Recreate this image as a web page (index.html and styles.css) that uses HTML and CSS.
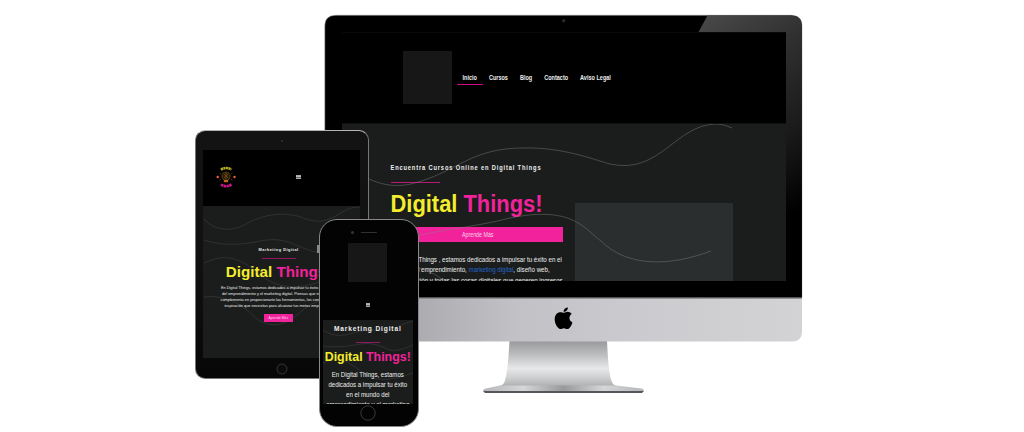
FILE: index.html
```html
<!DOCTYPE html>
<html lang="es">
<head>
<meta charset="utf-8">
<title>Digital Things</title>
<link rel="stylesheet" href="styles.css">
</head>
<body>
<main class="stage">
  <section class="monitor">
    <svg class="shell" viewBox="0 0 480 382" width="480" height="382">
      <defs>
        <linearGradient id="chin"><stop offset="0" stop-color="#a6a6aa"/><stop offset=".2" stop-color="#adadb1"/><stop offset=".4" stop-color="#c2c2c6"/><stop offset=".65" stop-color="#cbcbcf"/><stop offset="1" stop-color="#d3d3d5"/></linearGradient>
        <linearGradient id="neck" x1="0" y1="0" x2="0" y2="1"><stop offset="0" stop-color="#98999b"/><stop offset=".3" stop-color="#bcbdbf"/><stop offset=".6" stop-color="#e7e8ea"/><stop offset=".8" stop-color="#cfd0d2"/><stop offset="1" stop-color="#adaeb0"/></linearGradient>
        <linearGradient id="foot"><stop offset="0" stop-color="#b5b6b8"/><stop offset=".25" stop-color="#d5d6d8"/><stop offset=".5" stop-color="#98999b"/><stop offset=".75" stop-color="#d5d6d8"/><stop offset="1" stop-color="#b5b6b8"/></linearGradient>
        <linearGradient id="glare" x1="0" y1="0" x2=".25" y2="1"><stop offset="0" stop-color="#4a4a4a"/><stop offset=".3" stop-color="#2f2f2f"/><stop offset=".6" stop-color="#1a1a1a"/><stop offset=".88" stop-color="#000"/></linearGradient>
      </defs>
      <path fill="url(#neck)" d="M184.500 326H282C283 345 284 360 287 367Q288 371 295 371.500H171Q178 371 179.500 367C182.500 359 183.500 342 184.500 326Z"/>
      <path fill="url(#foot)" d="M175 370.500H292L316 373.500Q319 374 319 376H158Q158 374 161 373.500Z"/>
      <path fill="#55565c" d="M158 376H319L317 378H160Z"/>
      <path fill="url(#chin)" d="M0 282H477V317Q477 326.500 467 326.500H10Q0 326 0 317Z"/>
      <path fill="#000" stroke="#a5a5a5" stroke-width=".5" d="M-.2 283V11Q-.2 .2 11 .2H466Q477 .2 477 11V283Z"/>
      <path fill="url(#glare)" d="M382.500 .5H466Q476.700 .5 476.700 11V282H430L460.500 220V17H373.500Z"/>
      <path fill="#808083" d="M0 282.500H477V283.700H0Z"/>
      <circle cx="238.700" cy="5.700" r="1.700" fill="#292831"/>
      <g transform="translate(229.400 292.500)">
        <path d="M9.300 5.200C11 5.200 11.600 4.300 13.400 4.300C15 4.300 16.400 5.200 17.300 6.600C14 8.600 14.400 13.400 18 14.900C17.200 17.500 15.300 21.500 12.800 21.500C11.600 21.500 11 20.700 9.500 20.700C7.900 20.700 7.300 21.500 6 21.500C3.200 21.500 .3 16.400 .3 11.800C.3 7.300 3.100 4.700 5.900 4.700C7.600 4.700 8.400 5.200 9.300 5.200Z"/>
        <path d="M9.200 4.400C9 2.100 11.100 .1 13.400 0C13.600 2.400 11.500 4.400 9.200 4.400Z"/>
      </g>
    </svg>
    <div class="desk-screen">
      <header class="desk-header">
        <div class="desk-logo"></div>
        <nav class="desk-nav"><a class="active"><span>Inicio</span></a><a><span>Cursos</span></a><a><span>Blog</span></a><a><span>Contacto</span></a><a><span>Aviso Legal</span></a></nav>
      </header>
      <div class="desk-hero">
        <div class="desk-copy">
          <p class="desk-kicker">Encuentra Cursos Online en Digital Things</p>
          <div class="desk-rule"></div>
          <h1 class="desk-title"><span>Digital</span> Things!</h1>
          <div class="desk-button"><span>Aprende Más</span></div>
          <p class="desk-text"><span>En Digital Things , estamos dedicados a impulsar tu éxito en el</span><span>mundo del emprendimiento, <a>marketing digital</a>, diseño web,</span><span>programación y todas las cosas digitales que generen ingresos</span></p>
        </div>
        <div class="desk-media"></div>
        <svg class="waves" viewBox="342 123 444 158" width="444" height="158">
          <path d="M342 160C370 184 394 189 418 181C457 170 472 147 523 147C562 146 592 158 610 163C661 174 675 123 717 123Q724 123 732 127"/>
          <path d="M400 238C445 228 475 226 510 217C574 204 585 229 601 240C628 267 671 265 711 250"/>
          <path d="M400 262Q430 268 443 279"/>
        </svg>
      </div>
    </div>
  </section>

  <section class="tablet">
    <div class="tablet-camera"></div>
    <div class="tablet-screen">
      <header class="tablet-header">
        <svg class="badge" viewBox="0 0 20 22" width="20" height="22">
          <path d="M5 3.700Q10 .2 15.500 3.700" fill="none" stroke="#b8ad20" stroke-width="2.600" stroke-dasharray="2.200 .45"/>
          <path d="M5 18.500Q10 22 15.500 18.500" fill="none" stroke="#c51686" stroke-width="2.700" stroke-dasharray="2.500 .4"/>
          <path d="M8 15.500V14C4 11 6 6 10 6S16 11 12 14V15.500Z" fill="#2d1f0c" stroke="#89601e" stroke-width=".8" stroke-dasharray="1 .6"/>
          <path d="M8 8L12 12M12 8L8 12M10 6V15M5 8L3.500 7M15 8L16.500 7M5 13L3.500 14.500M15 13L16.500 14.500" stroke="#84551a" stroke-width=".6"/>
          <rect x="8" y="14" width="4" height="2.200" fill="#bd6919"/>
          <circle cx="1.700" cy="11" r="1.200" fill="#f4622b"/><circle cx="18.500" cy="11" r="1.200" fill="#f4622b"/>
        </svg>
        <div class="menu"></div>
      </header>
      <div class="tablet-hero">
        <svg class="waves dim" viewBox="203 206 157 152" width="157" height="152">
          <path d="M204 219C216 232 232 231 244 225C265 213 287 211 306 219C333 228 340 206 360 207"/>
          <path d="M204 240C228 248 250 243 266 240C296 237 300 255 334 253"/>
          <path d="M204 263C225 253 239 258 254 270C272 286 292 294 330 278"/>
          <path d="M204 297C231 294 246 309 257 319C277 332 292 320 304 309Q316 298 335 301"/>
        </svg>
        <p class="tablet-kicker">Marketing Digital</p>
        <div class="tablet-rule"></div>
        <h2 class="tablet-title"><span>Digital</span> Things!</h2>
        <p class="tablet-text"><span>En Digital Things, estamos dedicados a impulsar tu éxito en el mundo</span><span>del emprendimiento y el marketing digital. Piensas que nuestra labor</span><span>complementa en proporcionarte las herramientas, los conocimientos y</span><span>inspiración que necesitas para alcanzar tus metas empresariales.</span></p>
        <div class="tablet-button"><span>Aprende Más</span></div>
      </div>
    </div>
    <svg class="tablet-home" viewBox="0 0 12 12" width="12" height="12"><circle cx="6" cy="6" r="5"/></svg>
  </section>

  <section class="phone">
    <div class="phone-side"></div>
    <div class="phone-top"><i class="lens"></i><i class="speaker"></i></div>
    <div class="phone-logo"></div>
    <div class="menu phone-menu"></div>
    <div class="phone-screen">
      <svg class="waves dim" viewBox="323 320 90 84" width="90" height="84">
        <path d="M323 330C343 343 355 328 374 330C391 333 397 325 413 321"/>
        <path d="M323 346C353 350 362 338 383 347Q393 355 413 345"/>
        <path d="M323 363C343 354 353 366 366 375Q382 385 413 373"/>
      </svg>
      <p class="phone-kicker">Marketing Digital</p>
      <div class="phone-rule"></div>
      <h2 class="phone-title"><span>Digital</span> Things!</h2>
      <p class="phone-text"><span>En Digital Things, estamos</span><span>dedicados a impulsar tu éxito</span><span>en el mundo del</span><span>emprendimiento y el marketing</span></p>
    </div>
    <svg class="phone-home" viewBox="0 0 16 16" width="16" height="16"><circle cx="8" cy="8" r="7.200"/></svg>
  </section>
</main>
</body>
</html>
```
FILE: styles.css
```css
* { box-sizing: border-box; }
body { margin: 0; background: #fff; font-family: "Liberation Sans", Arial, sans-serif; color: #eee; }
p, h1, h2 { margin: 0; white-space: nowrap; }
.stage { position: relative; width: 1024px; height: 432px; overflow: hidden; }
.shell { display: block; overflow: visible; }
.waves { position: absolute; left: 0; top: 0; fill: none; stroke: #818585; stroke-opacity: .48; stroke-width: .9; }
.dim { stroke-opacity: .28; stroke-width: .7; }

.monitor { position: absolute; left: 325px; top: 15px; }
.desk-screen { position: absolute; left: 17px; top: 17px; width: 443.500px; height: 249px; overflow: hidden; background: #1b1d1c; }
.desk-header { display: flex; height: 92px; padding: 19px 0 0 60.500px; background: #000; border-top: 1px solid #090909; border-bottom: 1px solid #111; }
.desk-logo { width: 49.500px; height: 53px; margin-top: -1px; background: #171717; }
.desk-nav { display: flex; align-items: flex-start; padding: 21px 0 0 4.500px; font-size: 5.520px; line-height: 8px; font-weight: bold; }
.desk-nav a { padding: 0 6px 3px; border-bottom: 1.500px solid transparent; }
.desk-nav span { display: block; transform: translateY(.5px) scaleY(1.15); }
.desk-nav .active { border-color: #d10c86; }
.desk-hero { position: relative; display: flex; height: 157px; padding-left: 48.500px; }
.desk-copy { width: 172.500px; padding-top: 40px; }
.desk-kicker { font-size: 5.700px; line-height: 8px; font-weight: bold; letter-spacing: .86px; transform: scaleY(1.1); }
.desk-rule { width: 49px; height: 1px; margin-top: 10px; background: #b51a79; }
.desk-title { margin-top: 6.500px; font-size: 21.900px; line-height: 28px; color: #f1229b; transform: scaleY(1.08); }
.desk-title span, .tablet-title span, .phone-title span { color: #f3ed2d; }
.desk-button { height: 15px; margin-top: 9.500px; background: #f1229b; font-size: 5.300px; line-height: 15px; text-align: center; color: #fcd3eb; }
.desk-button span { display: block; padding-left: 2px; transform: translateY(.5px) scaleY(1.2); }
.desk-text { margin-top: 12.700px; font-size: 6.160px; line-height: 10.800px; }
.desk-text span { display: block; transform: scaleY(1.14); }
.desk-text a { color: #2363c7; }
.desk-media { width: 158px; height: 78px; margin: 79px 0 0 12px; background: #2a2e2f; }

.tablet { position: absolute; left: 195px; top: 129.500px; width: 173.500px; height: 249.500px; padding: 9px 0 0 7px; border: 1px solid #777; border-top-color: #b5b5b5; border-radius: 10px; background: linear-gradient(#131313, #111 50%, #070707); }
.tablet-camera { width: 2px; height: 2px; margin-left: 78px; border-radius: 50%; background: #303033; }
.tablet-screen { width: 157px; height: 208px; margin-top: 8.500px; overflow: hidden; background: #1b1d1c; }
.tablet-header { display: flex; height: 56px; padding: 16px 0 0 13px; background: #000; }
.menu { width: 4.500px; height: 4px; border-top: 1px solid #aaa; border-bottom: 1px solid #aaa; background: linear-gradient(#666 25%, #bbb 25% 75%, #666 75%); }
.tablet-header .menu { margin: 9px 0 0 60px; }
.tablet-hero { position: relative; height: 152px; padding-top: 41px; }
.tablet-kicker { padding-left: 55.500px; font-size: 3.900px; line-height: 6px; font-weight: bold; letter-spacing: .52px; transform: scaleY(1.1); }
.tablet-rule { width: 34px; height: 1px; margin: 5px 0 0 59px; background: #941663; }
.tablet-title { margin-top: 4px; padding-left: 22.800px; font-size: 15.200px; line-height: 18px; color: #f1229b; }
.tablet-text { display: flex; flex-direction: column; align-items: center; width: 136px; margin: 4px 0 0 9.500px; font-size: 3.860px; line-height: 6px; }
.tablet-text span { transform: scaleY(1.08); }
.tablet-button { width: 28.500px; height: 8px; margin: 5px 0 0 61px; background: #f1229b; font-size: 3.300px; line-height: 8px; text-align: center; color: #ffd8ed; }
.tablet-home { display: block; margin: 4.500px 0 0 72.500px; fill: #0b0b0b; stroke: #484848; stroke-width: .7; }

.phone { position: absolute; left: 318.500px; top: 218.500px; width: 100.500px; height: 208.500px; padding: 11.500px 0 0 3px; border: 1.800px solid #88888b; border-radius: 18px; background: #030303; }
.phone-side { position: absolute; left: -2.500px; top: 25px; width: 1.500px; height: 8px; background: #88888b; }
.phone-top { display: flex; align-items: center; gap: 7.500px; height: 3px; padding-left: 28px; }
.lens { width: 3px; height: 3px; border-radius: 50%; background: #303448; }
.speaker { width: 15.500px; height: 1.300px; border-radius: 1px; background: #303033; }
.phone-logo { width: 38.500px; height: 38.500px; margin: 9px 0 0 25.500px; background: #171717; }
.phone-menu { margin: 21.500px 0 0 43px; }
.phone-screen { position: relative; width: 90.500px; height: 84px; margin-top: 13px; padding-top: 4px; overflow: hidden; background: #1b1d1c; text-align: center; }
.phone-kicker { font-size: 6.600px; line-height: 9px; font-weight: bold; letter-spacing: .86px; transform: scaleY(1.08); }
.phone-rule { width: 24px; height: 1px; margin: 8.500px auto 0; background: #941663; }
.phone-title { margin-top: 6px; font-size: 12.400px; line-height: 16px; color: #f1229b; transform: scaleY(1.05); }
.phone-text { margin-top: 5.500px; font-size: 6.080px; line-height: 10px; }
.phone-text span { display: block; transform: scaleY(1.1); }
.phone-text span:last-child { margin-left: -3px; margin-right: -3px; }
.phone-home { display: block; margin: 1px 0 0 37.500px; fill: #030303; stroke: #49494a; stroke-width: .8; }
```
